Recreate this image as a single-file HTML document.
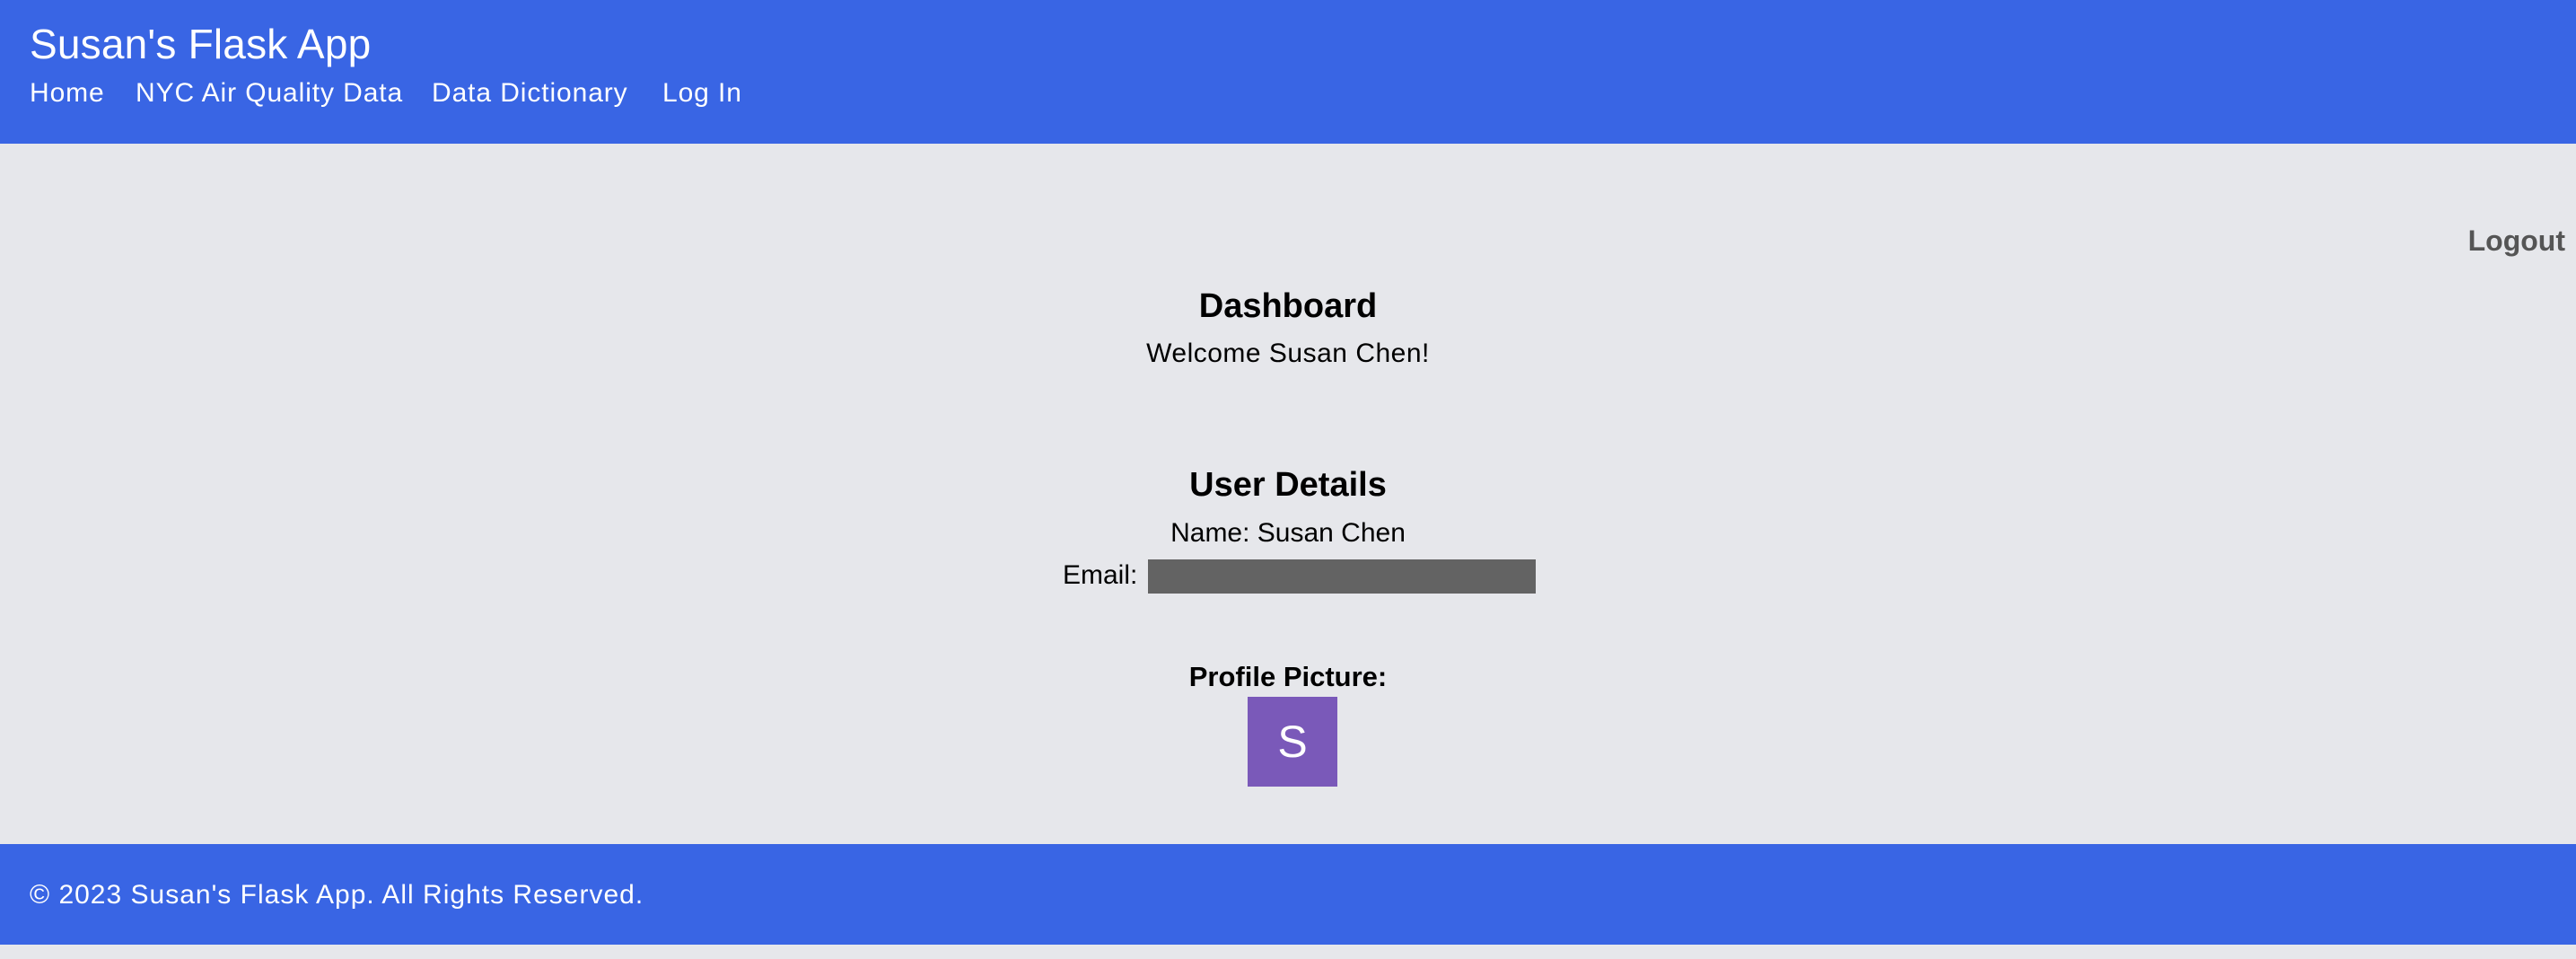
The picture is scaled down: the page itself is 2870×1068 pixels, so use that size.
<!DOCTYPE html>
<html><head><meta charset="utf-8"><style>
html,body{margin:0;padding:0}
body{width:2870px;height:1068px;background:#e6e7eb;position:relative;overflow:hidden;font-family:"Liberation Sans",Arial,sans-serif;}
.a{position:absolute;line-height:1;white-space:nowrap}
.c{left:0;width:2870px;text-align:center}
#hdr{position:absolute;left:0;top:0;width:2870px;height:160px;background:#3965e4}
#ftr{position:absolute;left:0;top:940px;width:2870px;height:112px;background:#3965e4}
.w{color:#fff}
.n{font-size:30px;letter-spacing:0.9px}
</style></head><body>
<div id="hdr"></div>
<div class="a w" style="left:33px;top:26px;font-size:46px;letter-spacing:0.2px">Susan's Flask App</div>
<div class="a w n" style="left:33px;top:89px">Home</div>
<div class="a w n" style="left:151px;top:89px">NYC Air Quality Data</div>
<div class="a w n" style="left:481px;top:89px">Data Dictionary</div>
<div class="a w n" style="left:738px;top:89px">Log In</div>

<div class="a" style="right:12px;top:252px;font-size:32px;font-weight:bold;color:#555">Logout</div>

<div class="a c" style="top:322px;font-size:38px;font-weight:bold;color:#000">Dashboard</div>
<div class="a c" style="top:379px;font-size:30px;color:#000;letter-spacing:0.5px">Welcome Susan Chen!</div>
<div class="a c" style="top:521px;font-size:38px;font-weight:bold;color:#000">User Details</div>
<div class="a c" style="top:579px;font-size:30px;color:#000">Name: Susan Chen</div>
<div class="a" style="left:1184px;top:626px;font-size:30px;color:#000">Email:</div>
<div style="position:absolute;left:1279px;top:623px;width:432px;height:38px;background:#636363"></div>
<div class="a c" style="top:738px;font-size:31px;font-weight:bold;color:#000">Profile Picture:</div>
<div style="position:absolute;left:1390px;top:776px;width:100px;height:100px;background:#7a59b9;color:#fff;font-size:50px;line-height:100px;text-align:center">S</div>

<div id="ftr"></div>
<div class="a w" style="left:33px;top:982px;font-size:30px;letter-spacing:1px">© 2023 Susan's Flask App. All Rights Reserved.</div>
</body></html>
